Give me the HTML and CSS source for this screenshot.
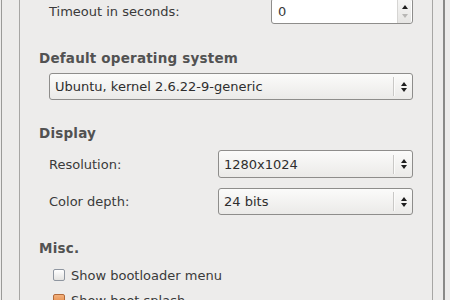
FILE: index.html
```html
<!DOCTYPE html>
<html>
<head>
<meta name="viewport" content="width=device-width, initial-scale=1">
<link rel="stylesheet" href="styles.css">
</head>
<body>

<div class="window">
  <div class="panel">

    <!-- boot timeout -->
    <div class="row row-timeout">
      <span class="label">Timeout in seconds:</span>
      <div class="spin">
        <span class="spin-value">0</span>
        <div class="spin-buttons">
          <span class="arrow-up"></span>
          <span class="arrow-down dim"></span>
        </div>
      </div>
    </div>

    <h3 class="heading h-os">Default operating system</h3>
    <div class="combo combo-os">
      <span class="combo-text">Ubuntu, kernel 2.6.22-9-generic</span>
      <span class="combo-sep"></span>
      <span class="combo-arrows"><span class="arrow-up"></span><span class="arrow-down"></span></span>
    </div>

    <h3 class="heading h-display">Display</h3>
    <div class="row row-res">
      <span class="label">Resolution:</span>
      <div class="combo combo-small">
        <span class="combo-text">1280x1024</span>
        <span class="combo-sep"></span>
        <span class="combo-arrows"><span class="arrow-up"></span><span class="arrow-down"></span></span>
      </div>
    </div>
    <div class="row row-depth">
      <span class="label">Color depth:</span>
      <div class="combo combo-small">
        <span class="combo-text">24 bits</span>
        <span class="combo-sep"></span>
        <span class="combo-arrows"><span class="arrow-up"></span><span class="arrow-down"></span></span>
      </div>
    </div>

    <h3 class="heading h-misc">Misc.</h3>
    <label class="check check-first"><span class="box"></span>Show bootloader menu</label>
    <label class="check check-second"><span class="box checked"></span>Show boot splash</label>

  </div>
</div>

</body>
</html>
```

FILE: styles.css
```css
html, body {
  margin: 0;
  padding: 0;
  background: #edeceb;
  overflow: hidden;
}

body {
  width: 450px;
  height: 300px;
  font-family: "DejaVu Sans", Verdana, sans-serif;
  font-size: 13px;
  color: #3a3a3a;
}

.window {
  margin-left: 1px;
  width: 444px;
  height: 300px;
  padding-left: 17px;
  border-left: 1px solid #9a9a98;
  border-right: 2px solid #8a8a88;
  box-sizing: border-box;
  overflow: hidden;
}

.panel {
  width: 414px;
  margin-top: -12px;
  padding: 10px 19px 0 19px;
  border-left: 1px solid #a7a6a4;
  border-right: 1px solid #a7a6a4;
  box-sizing: border-box;
  height: 330px;
}

.row {
  display: flex;
  align-items: center;
  padding-left: 10px;
}

.label {
  flex: 1;
}

.row-timeout {
  height: 26px;
}

.spin {
  width: 142px;
  height: 26px;
  box-sizing: border-box;
  border: 1px solid #8e8d8b;
  border-radius: 3px;
  background: #fff;
  display: flex;
  align-items: center;
}

.spin-value {
  flex: 1;
  padding-left: 6px;
}

.spin-buttons {
  width: 13px;
  height: 24px;
  border-left: 1px solid #d6d5d3;
  background: linear-gradient(#f6f6f5, #e6e5e3);
  display: flex;
  flex-direction: column;
  align-items: center;
  justify-content: center;
  gap: 5px;
  margin-right: 1px;
}

.arrow-up {
  width: 0;
  height: 0;
  border-left: 3px solid transparent;
  border-right: 3px solid transparent;
  border-bottom: 4px solid #1e1e1e;
}

.arrow-down {
  width: 0;
  height: 0;
  border-left: 3px solid transparent;
  border-right: 3px solid transparent;
  border-top: 4px solid #1e1e1e;
}

.arrow-down.dim {
  border-top-color: #b8b7b5;
}

.heading {
  margin: 0;
  font-size: 13.5px;
  font-weight: bold;
  line-height: 16px;
  letter-spacing: 0.2px;
  color: #525252;
}

.h-os {
  margin-top: 26px;
}

.h-display {
  margin-top: 25px;
}

.h-misc {
  margin-top: 25px;
}

.combo {
  height: 27px;
  box-sizing: border-box;
  border: 1px solid #8e8d8b;
  border-radius: 3px;
  background: linear-gradient(#fbfbfa, #ebeae8);
  display: flex;
  align-items: center;
}

.combo-os {
  margin-top: 7px;
  margin-left: 10px;
}

.combo-small {
  width: 195px;
}

.combo-text {
  flex: 1;
  padding-left: 5px;
  color: #2e2e2e;
}

.combo-sep {
  width: 1px;
  height: 19px;
  background: #c9c8c6;
  border-right: 1px solid #fbfbfa;
}

.combo-arrows {
  width: 17px;
  display: flex;
  flex-direction: column;
  align-items: center;
  gap: 2px;
}

.row-res {
  margin-top: 9px;
  height: 28px;
}

.row-res .combo {
  height: 28px;
}

.row-depth {
  margin-top: 10px;
  height: 27px;
}

.check {
  display: flex;
  align-items: center;
  height: 18px;
  padding-left: 14px;
  gap: 6px;
}

.check-first {
  margin-top: 10px;
}

.check-second {
  margin-top: 7px;
}

.box {
  width: 12px;
  height: 12px;
  box-sizing: border-box;
  border: 1px solid #8f96a0;
  border-radius: 2px;
  background: linear-gradient(#ffffff, #e4e3e1);
}

.box.checked {
  border-color: #b26a3a;
  background: linear-gradient(#f3b07c, #e0833f);
}
```
